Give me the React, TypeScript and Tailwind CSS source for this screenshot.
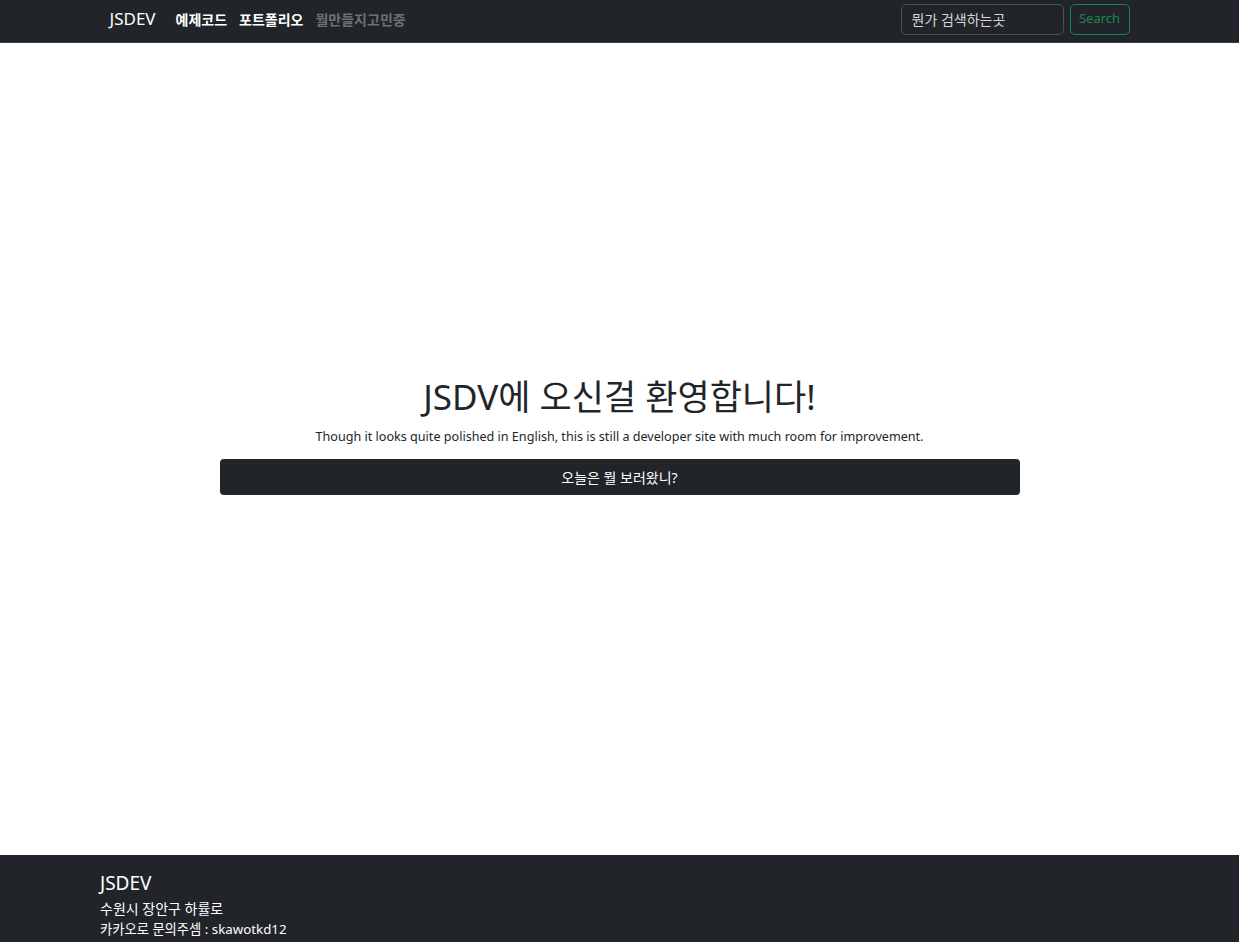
import React from "react";

const FONT = { fontFamily: '"Noto Sans", "Noto Sans CJK KR", sans-serif' };

export default function App() {
  return (
    <div className="flex min-h-[942px] flex-col bg-white text-[#212529]" style={FONT}>
      {/* 상단 네비게이션 */}
      <nav className="h-[43px] border-b border-[#3a3f44] bg-[#212529]">
        <div className="mx-auto flex h-full w-[1020px] items-center pb-[4px]">
          <span className="mr-5 text-[17px] text-white">JSDEV</span>
          <a className="mr-3 text-[14px] font-bold text-white">예제코드</a>
          <a className="mr-3 text-[14px] font-bold text-white">포트폴리오</a>
          <a className="text-[14px] font-bold text-[#6c7176]">뭘만들지고민중</a>
          <form className="ml-auto flex items-center gap-[6px]">
            <input
              placeholder="뭔가 검색하는곳"
              className="h-[31px] w-[163px] rounded-[5px] border border-[#495057] bg-[#212529] px-[10px] text-[14px] text-white placeholder:text-[#d4d6d8]"
            />
            <button
              type="button"
              className="h-[31px] w-[60px] rounded-[5px] border border-[#198754] text-[13px] text-[#198754]"
            >
              Search
            </button>
          </form>
        </div>
      </nav>

      {/* 메인 */}
      <main className="flex flex-1 flex-col items-center justify-center pb-[27px]">
        <h1 className="text-[35px] leading-[1.2] font-normal">JSDV에 오신걸 환영합니다!</h1>
        <p className="mt-[10px] text-[12.6px]">
          Though it looks quite polished in English, this is still a developer site with much room for improvement.
        </p>
        <button
          type="button"
          className="mt-[13px] h-[36px] w-[800px] rounded-[4px] bg-[#212529] text-[14px] text-white"
        >
          오늘은 뭘 보러왔니?
        </button>
      </main>

      {/* 푸터 */}
      <footer className="h-[87px] bg-[#212529] text-white">
        <div className="ml-[100px] pt-[16px]">
          <div className="text-[19px] leading-[24px]">JSDEV</div>
          <div className="mt-[3px] text-[14px] leading-[21px]">수원시 장안구 하률로</div>
          <div className="text-[13.3px] leading-[21px]">카카오로 문의주셈 : skawotkd12</div>
        </div>
      </footer>
    </div>
  );
}
